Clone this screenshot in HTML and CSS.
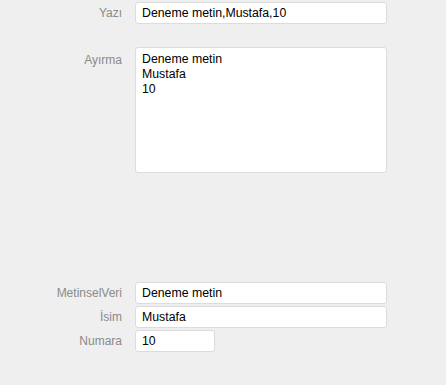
FILE: index.html
```html
<!DOCTYPE html>
<html>
<head>
<meta charset="utf-8">
<link rel="stylesheet" href="styles.css">
</head>
<body>
<div class="form">
  <div class="row">
    <label class="lbl">Yazı</label>
    <input class="field" type="text" value="Deneme metin,Mustafa,10">
  </div>
  <div class="row row-area">
    <label class="lbl lbl-area">Ayırma</label>
    <textarea class="field area">Deneme metin
Mustafa
10</textarea>
  </div>
  <div class="group">
    <div class="row">
      <label class="lbl">MetinselVeri</label>
      <input class="field" type="text" value="Deneme metin">
    </div>
    <div class="row">
      <label class="lbl">İsim</label>
      <input class="field" type="text" value="Mustafa">
    </div>
    <div class="row">
      <label class="lbl">Numara</label>
      <input class="field short" type="text" value="10">
    </div>
  </div>
</div>
</body>
</html>
```
FILE: styles.css
```css
html, body {
  margin: 0;
  padding: 0;
  background: #efefef;
  font-family: "Liberation Sans", Arial, sans-serif;
  font-size: 12px;
}
.form {
  display: flex;
  flex-direction: column;
  padding-top: 2px;
}
.row {
  display: flex;
  align-items: flex-start;
  gap: 13px;
}
.row-area {
  margin-top: 23px;
}
.group {
  margin-top: 109px;
  display: flex;
  flex-direction: column;
  gap: 2px;
}
.lbl {
  width: 122px;
  flex: none;
  text-align: right;
  color: #8a8a8a;
  line-height: 22px;
  font-size: 12px;
}
.lbl-area {
  line-height: 15px;
  padding-top: 6px;
}
.field {
  box-sizing: border-box;
  width: 252px;
  height: 22px;
  margin: 0;
  border: 1px solid #dcdcdc;
  border-radius: 3px;
  background: #fff;
  padding: 0 6px;
  font-family: "Liberation Sans", Arial, sans-serif;
  font-size: 12.3px;
  color: #000;
  outline: none;
}
.area {
  height: 126px;
  padding: 4px 6px;
  line-height: 15px;
  resize: none;
  overflow: hidden;
}
.short {
  width: 80px;
}
```
